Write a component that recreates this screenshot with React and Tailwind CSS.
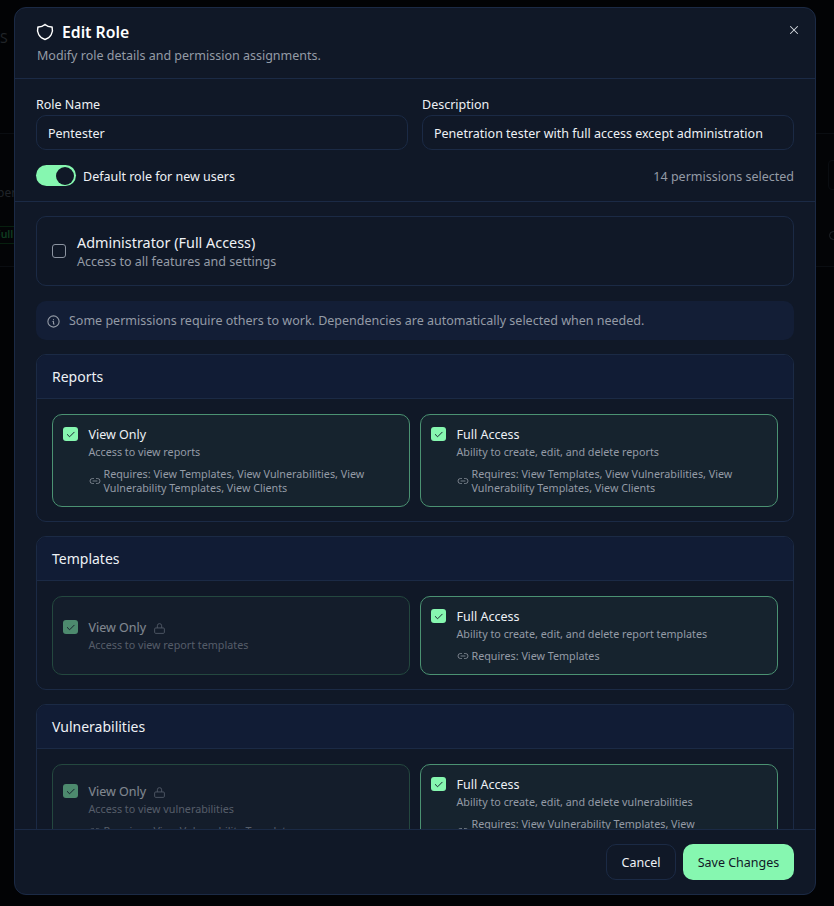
import React from "react"
import {Link2} from "lucide-react"
import {TbShield, TbX, TbInfoCircle, TbCheck} from "react-icons/tb"

const sections = [
    {
        name: "Reports",
        items: [
            {title: "View Only", desc: "Access to view reports", req: "View Templates, View Vulnerabilities, View Vulnerability Templates, View Clients"},
            {title: "Full Access", desc: "Ability to create, edit, and delete reports", req: "View Templates, View Vulnerabilities, View Vulnerability Templates, View Clients"},
        ],
    },
    {
        name: "Templates",
        items: [
            {title: "View Only", desc: "Access to view report templates", locked: true},
            {title: "Full Access", desc: "Ability to create, edit, and delete report templates", req: "View Templates"},
        ],
    },
    {
        name: "Vulnerabilities",
        items: [
            {title: "View Only", desc: "Access to view vulnerabilities", req: "View Vulnerability Templates", locked: true},
            {title: "Full Access", desc: "Ability to create, edit, and delete vulnerabilities", req: "View Vulnerability Templates, View Vulnerabilities"},
        ],
    },
]

const LockIcon = () => (
    <svg width="13" height="13" viewBox="0 0 24 24" fill="none" stroke="currentColor" strokeWidth="1.7" className="text-[#8b93a0]">
        <rect x="3" y="11" width="18" height="10" rx="2"/>
        <path d="M8 11V7a4 4 0 0 1 8 0v4"/>
    </svg>
)

const PermissionCard = ({item}) => (
    <div className={`flex items-center rounded-[10px] border px-[10px] py-[11.75px] ${item.locked ? "border-[#24483f] bg-[#141d2b]" : "border-[#4b9272] bg-[#16232e]"}`}>
        <div className={`flex w-full gap-[10.5px] ${item.locked ? "opacity-50" : ""}`}>
            <div className="mt-px flex h-[14px] w-[15px] shrink-0 items-center justify-center rounded-[3px] bg-[#86f7b0] text-[#101827]">
                <TbCheck size={11} strokeWidth={2}/>
            </div>
            <div className="-mb-px min-w-0 flex-1 pt-px">
                <div className="flex items-center gap-[7px] text-[12.5px] leading-[16px] text-[#eef1f5]">
                    {item.title}
                    {item.locked && <LockIcon/>}
                </div>
                <p className="mt-[2px] text-[10.75px] leading-[14px] text-[#949ba6]">{item.desc}</p>
                {item.req && (
                    <div className="mt-[8px] flex items-center gap-[3px] text-[10.75px] leading-[14px] text-[#949ba6]">
                        <Link2 size={12} strokeWidth={1.5} className="shrink-0"/>
                        <span>Requires: {item.req}</span>
                    </div>
                )}
            </div>
        </div>
    </div>
)

const App = () => {
    return (
        <div className="relative h-[906px] w-[834px] overflow-hidden bg-[#020305] font-['Noto_Sans',sans-serif] text-[#eef1f5]">
            {/*page behind the backdrop*/}
            <div className="absolute left-0 top-[133px] h-[134px] w-full border-y border-[#0a0d11] bg-[#030406]"></div>
            <span className="absolute left-0 top-[27px] text-[14px] text-[#202429]">S</span>
            <span className="absolute left-[-3px] top-[184px] text-[12px] text-[#202429]">per</span>
            <span className="absolute left-[-10px] top-[226px] rounded border border-[#07200f] px-1 text-[10.5px] font-semibold text-[#0f3d20]">Full</span>
            <div className="absolute left-[828px] top-[160px] h-[30px] w-[20px] rounded border border-[#0a0d11]"></div>
            <div className="absolute left-[829px] top-[231px] h-[9px] w-[9px] rounded-full border border-[#202429]"></div>

            {/*dialog*/}
            <div className="absolute left-[14px] top-[7px] flex h-[888px] w-[802px] flex-col overflow-hidden rounded-xl border border-[#1b2a45] bg-[#101827]">
                <div className="relative h-[71px] shrink-0 border-b border-[#1b2a45] px-[22px] pt-[12px]">
                    <div className="flex items-center gap-[7px]">
                        <TbShield size={20} strokeWidth={1.75} className="-ml-[2px] text-white"/>
                        <h2 className="text-[15.75px] font-semibold leading-[24px] text-white">Edit Role</h2>
                    </div>
                    <p className="mt-[3px] text-[12.5px] leading-[18px] text-[#949ba6]">Modify role details and permission assignments.</p>
                    <TbX size={14} strokeWidth={1.75} className="absolute right-[14px] top-[15px] text-[#d5d9df]"/>
                </div>

                <div className="h-[123px] shrink-0 border-b border-[#1b2a45] px-[21px] pt-[16px]">
                    <div className="grid grid-cols-2 gap-[14px]">
                        <div>
                            <label className="block text-[12.5px] leading-[20px] text-[#eef1f5]">Role Name</label>
                            <input readOnly value="Pentester" className="h-[35px] w-full rounded-[10px] border border-[#1b2a45] bg-transparent px-[11px] pt-[2px] text-[12.5px] text-[#eef1f5] outline-none"/>
                        </div>
                        <div>
                            <label className="block text-[12.5px] leading-[20px] text-[#eef1f5]">Description</label>
                            <input readOnly value="Penetration tester with full access except administration" className="h-[35px] w-full rounded-[10px] border border-[#1b2a45] bg-transparent px-[11px] pt-[2px] text-[12.5px] text-[#eef1f5] outline-none"/>
                        </div>
                    </div>
                    <div className="mt-[15px] flex items-center justify-between">
                        <div className="flex items-center gap-[7px]">
                            <div className="flex h-[21px] w-[40px] items-center justify-end rounded-full bg-[#86f7b0] pr-[2px]">
                                <div className="h-[18px] w-[18px] rounded-full bg-[#101827]"></div>
                            </div>
                            <span className="pt-[3px] text-[12.5px] text-[#eef1f5]">Default role for new users</span>
                        </div>
                        <span className="pt-[3px] text-[12.5px] text-[#949ba6]">14 permissions selected</span>
                    </div>
                </div>

                <div className="min-h-0 flex-1 overflow-hidden px-[21px] pt-[14px]">
                    <div className="flex h-[70px] items-center gap-[11px] rounded-[10px] border border-[#1b2a45] px-[15px]">
                        <div className="h-[14px] w-[14px] rounded-[3px] border border-[#8b93a0]"></div>
                        <div className="pt-[2px]">
                            <div className="text-[14.4px] leading-[20px] text-[#eef1f5]">Administrator (Full Access)</div>
                            <div className="text-[12.55px] leading-[18px] text-[#949ba6]">Access to all features and settings</div>
                        </div>
                    </div>

                    <div className="mt-[15px] flex h-[39px] items-center gap-[8px] rounded-[10px] bg-[#131e36] px-[11px] pt-px text-[12.5px] text-[#949ba6]">
                        <TbInfoCircle size={15} strokeWidth={1.75} className="-ml-px"/>
                        Some permissions require others to work. Dependencies are automatically selected when needed.
                    </div>

                    <div className="mt-[14px] flex flex-col gap-[14px]">
                        {sections.map((section) => (
                            <div key={section.name} className="overflow-hidden rounded-[10px] border border-[#1b2a45]">
                                <div className="flex h-[44px] items-center border-b border-[#1b2a45] bg-[#111c35] px-[15px] text-[14px] text-[#eef1f5]">
                                    {section.name}
                                </div>
                                <div className="grid grid-cols-2 gap-[10px] px-[15px] pb-[14px] pt-[14.5px]">
                                    {section.items.map((item) => (
                                        <PermissionCard key={item.title} item={item}/>
                                    ))}
                                </div>
                            </div>
                        ))}
                    </div>
                </div>

                <div className="flex h-[65px] shrink-0 items-center justify-end gap-[7px] border-t border-[#1b2a45] px-[21px]">
                    <button className="h-[36px] w-[70px] rounded-[10px] border border-[#1b2a45] pt-[3px] text-[12.5px] text-[#eef1f5]">Cancel</button>
                    <button className="h-[36px] w-[111px] rounded-[10px] bg-[#86f7b0] pt-[3px] text-[12.5px] text-[#101827]">Save Changes</button>
                </div>
            </div>
        </div>
    )
}
export default App
